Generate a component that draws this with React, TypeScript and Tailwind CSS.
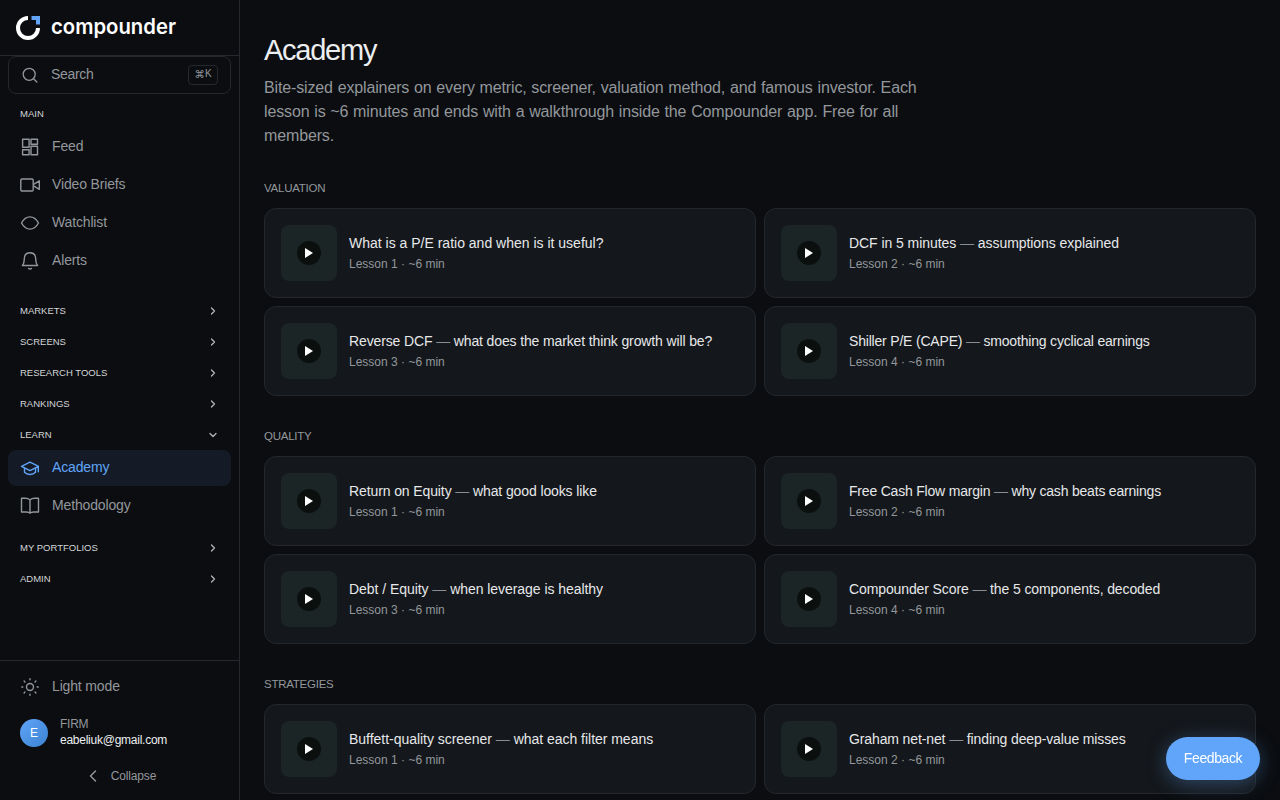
import type { ReactNode } from 'react';
import { ChevronDown, ChevronLeft, ChevronRight } from 'lucide-react';

const NAV_MAIN = [
  { label: 'Feed', icon: 'feed' },
  { label: 'Video Briefs', icon: 'video' },
  { label: 'Watchlist', icon: 'watch' },
  { label: 'Alerts', icon: 'bell' },
];

const SECTIONS = [
  {
    title: 'Valuation',
    lessons: [
      { title: 'What is a P/E ratio and when is it useful?', tracking: 'tracking-normal' },
      { title: 'DCF in 5 minutes — assumptions explained', tracking: 'tracking-[-0.06px]' },
      { title: 'Reverse DCF — what does the market think growth will be?', tracking: 'tracking-[-0.13px]' },
      { title: 'Shiller P/E (CAPE) — smoothing cyclical earnings', tracking: 'tracking-[-0.19px]' },
    ],
  },
  {
    title: 'Quality',
    lessons: [
      { title: 'Return on Equity — what good looks like', tracking: 'tracking-[-0.11px]' },
      { title: 'Free Cash Flow margin — why cash beats earnings', tracking: 'tracking-[-0.2px]' },
      { title: 'Debt / Equity — when leverage is healthy', tracking: 'tracking-[-0.05px]' },
      { title: 'Compounder Score — the 5 components, decoded', tracking: 'tracking-[-0.11px]' },
    ],
  },
  {
    title: 'Strategies',
    lessons: [
      { title: 'Buffett-quality screener — what each filter means', tracking: 'tracking-[-0.03px]' },
      { title: 'Graham net-net — finding deep-value misses', tracking: 'tracking-[-0.12px]' },
    ],
  },
];

const ICONS: Record<string, ReactNode> = {
  feed: <path d="M2.6 2.3h6.500v7.900H2.600zM11 2.300h6.500v4.900H11zM2.600 12.700h6.500v5H2.600zM11 9.300h6.500v8.400H11z" />,
  video: (
    <>
      <rect x="0.8" y="4" width="12.400" height="12" rx="1.200" />
      <path d="M14 9.100 19.300 5.800v8.600L14 11.100" />
    </>
  ),
  watch: <path d="M1.500 10C3.600 6.200 6.500 3.900 10 3.900s6.400 2.300 8.500 6.100c-2.100 3.800-5 6.100-8.500 6.100s-6.400-2.300-8.500-6.100Z" />,
  bell: <path d="M2.400 14.500h15.200c-1.600-1.700-1.900-3.500-1.900-6.400C15.700 4.200 13.500 1.700 10 1.700S4.300 4.200 4.300 8.100c0 2.900-.3 4.700-1.900 6.400ZM8.600 17.500c.7.700 2.100.7 2.800 0" />,
  academy: (
    <>
      <path d="m1.500 8.300 8.500-4.100 8.500 4.100L10 12.600 1.500 8.300ZM18.300 8.500v5.200" />
      <path d="M4.500 10.200v4c2.800 3 8.200 3 11 0v-4" />
    </>
  ),
  book: <path d="M10 3.900C8.800 2.700 7.300 2.300 5.500 2.300H1.500v13.700h4.800c1.800 0 3 .2 3.700 1.200.7-1 1.900-1.200 3.700-1.200h4.800V2.300h-4c-1.800 0-3.300.4-4.500 1.600ZM10 3.900v13.300" />,
  sun: (
    <>
      <circle cx="10" cy="10" r="3.500" />
      <path d="M10 1.800v1M10 17.200v1M1.800 10h1M17.200 10h1M4.100 4.100l.8.800M15.100 15.100l.8.800M4.100 15.900l.8-.8M15.100 4.900l.8-.8" />
    </>
  ),
};

function Icon({ name }: { name: string }) {
  return (
    <svg viewBox="0 0 20 20" className="w-5 h-5 shrink-0" fill="none" stroke="currentColor" strokeWidth="1.4" strokeLinecap="round" strokeLinejoin="round">
      {ICONS[name]}
    </svg>
  );
}

function NavItem({ label, icon, active }: { label: string; icon: string; active?: boolean }) {
  return (
    <a className={`flex items-center gap-3 h-9 px-3 rounded-lg text-sm tracking-[-0.15px] ${active ? 'bg-[#141b27] text-[#60a5fa]' : 'text-[#93979c]'}`}>
      <Icon name={icon} />
      <span className="pb-0.5">{label}</span>
    </a>
  );
}

function GroupHeader({ label, open }: { label: string; open?: boolean }) {
  const Chevron = open ? ChevronDown : ChevronRight;
  return (
    <div className="flex items-center justify-between h-[31px] px-3 text-[9.5px] uppercase text-[#d4d6d9]">
      <span className="pt-px">{label}</span>
      <Chevron className="w-3 h-3 text-[#b4b7ba]" strokeWidth={2.5} />
    </div>
  );
}

function Logo() {
  return (
    <div className="flex items-center h-[55px] pl-4 gap-[11px]">
      <svg viewBox="0 0 24 24" className="w-6 h-6" fill="none">
        <path d="M12 2A10 10 0 1 0 22 12" stroke="#fff" strokeWidth="4" />
        <path d="M15.500 0H24v8.500h-4V4h-4.500Z" fill="#60a5fa" />
      </svg>
      <svg viewBox="0 0 128 30" className="w-32 h-[30px]">
        <text x="0" y="20.500" textLength="125" lengthAdjust="spacingAndGlyphs" fill="#fff" className="font-[family-name:Inter] font-semibold text-[21px]">
          compounder
        </text>
      </svg>
    </div>
  );
}

function Sidebar() {
  return (
    <aside className="flex flex-col w-60 h-full shrink-0 border-r border-[#25282c]">
      <div className="border-b border-[#25282c]">
        <Logo />
      </div>
      <nav className="flex-1 px-2">
        <div className="flex items-center h-[38px] px-[11px] rounded-lg border border-[#25282c] text-sm text-[#93979c] mb-1">
          <svg viewBox="0 0 20 20" className="w-5 h-5" fill="none" stroke="currentColor" strokeWidth="1.300" strokeLinecap="round">
            <circle cx="9.200" cy="9.300" r="6" />
            <path d="m13.600 13.700 3.200 3.300" />
          </svg>
          <span className="ml-[11px] pb-0.5 flex-1 tracking-[-0.3px]">Search</span>
          <kbd className="flex items-center justify-center w-[30px] h-5 pb-0.5 mr-px rounded border border-[#25282c] text-[10px] font-['Liberation_Sans','DejaVu_Sans',sans-serif]">
            <span className="font-['DejaVu_Sans'] text-[10.5px]">⌘</span>K
          </kbd>
        </div>
        <div className="flex items-center h-[31px] px-3 pt-px text-[9.5px] text-[#d4d6d9]">MAIN</div>
        <div className="flex flex-col gap-0.5 mb-4">
          {NAV_MAIN.map((item) => (
            <NavItem key={item.label} {...item} />
          ))}
        </div>
        <GroupHeader label="Markets" />
        <GroupHeader label="Screens" />
        <GroupHeader label="Research Tools" />
        <GroupHeader label="Rankings" />
        <GroupHeader label="Learn" open />
        <div className="flex flex-col gap-0.5 mb-2">
          <NavItem label="Academy" icon="academy" active />
          <NavItem label="Methodology" icon="book" />
        </div>
        <GroupHeader label="My Portfolios" />
        <GroupHeader label="Admin" />
      </nav>
      <div className="h-[140px] px-2 pt-2 border-t border-[#25282c]">
        <NavItem label="Light mode" icon="sun" />
        <div className="flex items-center gap-3 h-14 px-3">
          <div className="flex items-center justify-center w-7 h-7 rounded-full bg-linear-to-br from-[#60a5fa] to-[#3b82d0] text-xs text-white">E</div>
          <div className="pb-0.5 text-xs leading-4 tracking-[-0.25px]">
            <div className="text-[#93979c]">FIRM</div>
            <div className="text-[#eceef0]">eabeliuk@gmail.com</div>
          </div>
        </div>
        <div className="flex items-center justify-center gap-2 h-[30px] text-xs tracking-[-0.15px] text-[#93979c]">
          <ChevronLeft className="w-5 h-5" strokeWidth={1.75} />
          <span>Collapse</span>
        </div>
      </div>
    </aside>
  );
}

function LessonCard({ title, tracking, index }: { title: string; tracking: string; index: number }) {
  const [head, tail] = title.split('—');
  return (
    <a className="flex items-center gap-3 h-[90px] px-4 rounded-xl border border-[#24272b] bg-[#14171b]">
      <div className="flex items-center justify-center w-14 h-14 rounded-lg bg-[#1b2526]">
        <div className="flex items-center justify-center w-6 h-6 pr-px rounded-full bg-[#0b100f]">
          <svg viewBox="0 0 8 10" className="w-2 h-2.5" fill="#fff">
            <path d="M0 0l8 5-8 5z" />
          </svg>
        </div>
      </div>
      <div className="pb-px">
        <div className={`text-sm leading-5 text-[#e6e8ea] ${tracking}`}>
          {head}
          {tail && (
            <>
              <span className="text-[#8a8d91]">—</span>
              {tail}
            </>
          )}
        </div>
        <div className="mt-[3px] text-xs leading-4 text-[#93979c]">Lesson {index} · ~6 min</div>
      </div>
    </a>
  );
}

export default function App() {
  return (
    <div className="flex w-full h-screen overflow-hidden bg-[#0b0d10] font-['Liberation_Sans',sans-serif]">
      <Sidebar />
      <main className="flex-1 px-6 pt-8 overflow-hidden">
        <h1 className="text-[29px] leading-9 tracking-[-1.25px] text-[#eceef0]">Academy</h1>
        <p className="mt-2 w-[672px] text-base leading-6 tracking-[-0.14px] [word-spacing:0.5px] text-[#93979c]">
          Bite-sized explainers on every metric, screener, valuation method, and famous investor. Each
          <br />
          lesson is ~6 minutes and ends with a walkthrough inside the Compounder app. Free for all
          <br />
          members.
        </p>
        <div className="flex flex-col gap-8 mt-8">
          {SECTIONS.map((section) => (
            <section key={section.title}>
              <h2 className="mb-3 text-[11.5px] leading-4 tracking-[-0.25px] uppercase text-[#93979c]">{section.title}</h2>
              <div className="grid grid-cols-2 gap-2">
                {section.lessons.map((lesson, i) => (
                  <LessonCard key={lesson.title} {...lesson} index={i + 1} />
                ))}
              </div>
            </section>
          ))}
        </div>
      </main>
      <button className="fixed right-5 bottom-5 w-[94px] h-[43px] pb-px rounded-full bg-[#60a5fa] text-sm tracking-[-0.4px] text-white shadow-[0_4px_20px_rgba(96,165,250,0.35)]">
        Feedback
      </button>
    </div>
  );
}
